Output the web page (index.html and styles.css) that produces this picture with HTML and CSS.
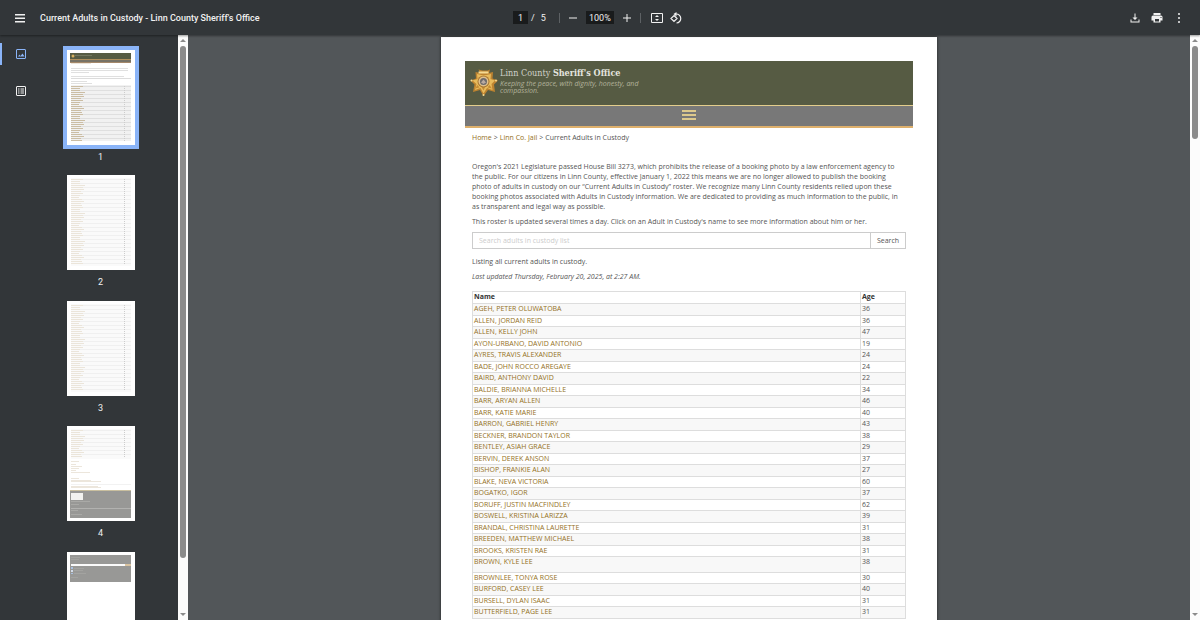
FILE: index.html
```html
<!DOCTYPE html>
<html lang="en">
<head>
    <meta charset="UTF-8">
    <meta name="viewport" content="width=device-width, initial-scale=1.0">
    <title>Current Adults in Custody - Linn County Sheriff's Office</title>
    <link rel="stylesheet" href="styles.css">
</head>
<body>
    <header class="toolbar">
        <div class="toolbar-start">
            <button class="icon-btn" aria-label="Menu">
                <svg viewBox="0 0 24 24"><path d="M2 4h20v3H2zM2 11h20v3H2zM2 18h20v3H2z"/></svg>
            </button>
            <h1 class="doc-title">Current Adults in Custody - Linn County Sheriff's Office</h1>
        </div>
        <div class="toolbar-center">
            <input class="page-input" type="text" value="1" aria-label="Page number">
            <span class="page-slash">/</span>
            <span class="page-total">5</span>
            <span class="divider"></span>
            <button class="icon-btn" aria-label="Zoom out">
                <svg viewBox="0 0 24 24"><path d="M4 11h16v2H4z"/></svg>
            </button>
            <input class="zoom-input" type="text" value="100%" aria-label="Zoom level">
            <button class="icon-btn" aria-label="Zoom in">
                <svg viewBox="0 0 24 24"><path d="M4 11h7V4h2v7h7v2h-7v7h-2v-7H4z"/></svg>
            </button>
            <span class="divider"></span>
            <button class="icon-btn fit-btn" aria-label="Fit to page">
                <svg viewBox="0 0 24 24"><path fill-rule="evenodd" d="M2 2h20a2 2 0 0 1 2 2v16a2 2 0 0 1-2 2H2a2 2 0 0 1-2-2V4a2 2 0 0 1 2-2zm0 2v16h20V4zM12 6l4 4H8zM12 18l4-4H8z"/></svg>
            </button>
            <button class="icon-btn" aria-label="Rotate">
                <svg viewBox="0 0 24 24"><path fill="none" stroke="currentColor" stroke-width="2.4" d="M8 7l6 6-6 6-6-6zM12 4a9 9 0 1 1 1 18"/><path d="M13 0v9L7 4z"/></svg>
            </button>
        </div>
        <div class="toolbar-end">
            <button class="icon-btn" aria-label="Download">
                <svg viewBox="0 0 24 24"><path d="M11 3h2v8h4l-5 5-5-5h4zM3 15h2v4h14v-4h2v6H3z"/></svg>
            </button>
            <button class="icon-btn" aria-label="Print">
                <svg viewBox="0 0 24 24"><path fill-rule="evenodd" d="M5 2h14v4H5zM4 7h16a3 3 0 0 1 3 3v7h-4v4H5v-4H1v-7a3 3 0 0 1 3-3zm4 7v5h8v-5zm11-4v2h2v-2z"/></svg>
            </button>
            <button class="icon-btn" aria-label="More actions">
                <svg viewBox="0 0 24 24"><circle cx="12" cy="4" r="2"/><circle cx="12" cy="12" r="2"/><circle cx="12" cy="20" r="2"/></svg>
            </button>
        </div>
    </header>

    <div class="viewer">
        <aside class="sidebar">
            <nav class="rail">
                <button class="rail-btn active" aria-label="Thumbnails">
                    <svg viewBox="0 0 20 20"><rect x="1" y="1" width="18" height="18" rx="1"/><path d="M4 15l3-4 2 3 4-5 4 6z" class="solid"/></svg>
                </button>
                <button class="rail-btn" aria-label="Document outline">
                    <svg viewBox="0 0 20 20"><rect x="1" y="1" width="18" height="18" rx="1"/><path d="M4 6h3M9 6h7M4 10h3M9 10h7M4 14h3M9 14h7"/></svg>
                </button>
            </nav>
            <div class="thumbs">
                <button class="thumb active">
                    <svg class="thumb-page" viewBox="0 0 68 95">
                        <rect x="3" y="3" width="61" height="6" fill="#565b43"/>
                        <circle cx="6" cy="6" r="1.5" fill="#d8b060"/>
                        <path d="M8 5.5h17" stroke="#73775f"/>
                        <path d="M3 9.5h61" stroke="#b08f5c"/>
                        <rect x="3" y="10" width="61" height="2" fill="#777266"/>
                        <path d="M3 12.5h61" stroke="#a5886a"/>
                        <path d="M4 13.5h20" stroke="#ece5da"/>
                        <path d="M4 18.5h57M4 20.5h57M4 22.5h18M4 26.5h53M4 31.5h16M4 33.5h21" stroke="#e0e0e0"/>
                        <path d="M4 28.5h60" stroke="#dcdcdc"/>
                        <rect x="4" y="35" width="60" height="56" fill="#f1f1f1"/>
                        <g class="lines" data-top="36" data-count="28" data-text="#cbbda4" data-rule="#dfdfdf"></g>
                    </svg>
                    <span class="thumb-label">1</span>
                </button>
                <button class="thumb">
                    <svg class="thumb-page" viewBox="0 0 68 95">
                        <rect x="4" y="3" width="60" height="88" fill="#fafafa"/>
                        <g class="lines" data-top="4" data-count="43" data-text="#ebe5da" data-rule="#f0f0f0"></g>
                    </svg>
                    <span class="thumb-label">2</span>
                </button>
                <button class="thumb">
                    <svg class="thumb-page" viewBox="0 0 68 95">
                        <rect x="4" y="3" width="60" height="88" fill="#fafafa"/>
                        <g class="lines" data-top="4" data-count="43" data-text="#ebe5da" data-rule="#f0f0f0"></g>
                    </svg>
                    <span class="thumb-label">3</span>
                </button>
                <button class="thumb">
                    <svg class="thumb-page" viewBox="0 0 68 95">
                        <rect x="4" y="3" width="60" height="30" fill="#fafafa"/>
                        <g class="lines" data-top="4" data-count="14" data-text="#ebe5da" data-rule="#f0f0f0"></g>
                        <path d="M4 35.5h8M4 38.5h5M4 40.5h11M4 42.5h8M4 44.5h5M4 46.5h19M4 52.5h8M4 54.5h20M4 55.5h30M4 60.5h27M4 61.5h30" stroke="#ece6dc"/>
                        <path d="M4 58.5h60" stroke="#f2f2f2"/>
                        <rect x="3" y="64" width="61" height="1" fill="#c9bf9f"/>
                        <rect x="3" y="65" width="61" height="27" fill="#989896"/>
                        <rect x="4" y="67" width="12" height="7" fill="#f2f2f0"/>
                        <path d="M4 75.5h19M4 78.5h8M4 84.5h7M4 88.5h11" stroke="#a9a9a6"/>
                        <path d="M4 82.5h60" stroke="#b2b2b0"/>
                    </svg>
                    <span class="thumb-label">4</span>
                </button>
                <button class="thumb" aria-label="Page 5">
                    <svg class="thumb-page" viewBox="0 0 68 95">
                        <rect x="3" y="3" width="61" height="27" fill="#989896"/>
                        <rect x="4" y="12" width="60" height="2" fill="#fafafa"/>
                        <rect x="58" y="12" width="6" height="2" fill="#d9c3a0"/>
                        <path d="M4 5.5h9M4 7.5h8M7 16.5h10M7 18.5h9M7 21.5h12M4 25.5h7" stroke="#a3a3a0"/>
                        <rect x="4" y="15" width="2" height="2" fill="#a9c0e0"/>
                        <rect x="4" y="18" width="2" height="2" fill="#d3dcea"/>
                        <rect x="4" y="21" width="2" height="1" fill="#a9c0e0"/>
                    </svg>
                </button>
            </div>
            <div class="scrollbar">
                <span class="arrow up"></span>
                <span class="track"><span class="handle handle-long"></span></span>
                <span class="arrow down"></span>
            </div>
        </aside>

        <main class="canvas">
            <article class="page">
                <header class="banner">
                    <svg class="badge" viewBox="0 0 56 60">
                        <path d="M27 58l-7-12-14 4 3-15-8-8 11-4-1-13 9 2-3-7 8 2h10l5-2-2 7 8-2-1 13 11 4-8 8 2 15-14-4z" fill="#bd8330"/>
                        <path d="M27 53l-6-11-11 4 3-12-8-7 10-3-1-10 9 2h10l9-2-1 10 9 3-7 7 2 12-11-4z" fill="#e8bb5c"/>
                        <path d="M27 47l-5-9h9zM10 43l5-7 4 5zM44 43l-5-7-4 5z" fill="#c48a34"/>
                        <circle cx="27" cy="29" r="12" fill="#a8752f"/>
                        <circle cx="27" cy="29" r="10" fill="#dfc08c"/>
                        <circle cx="27" cy="29" r="7" fill="#6d6a6c"/>
                        <path d="M22 31l5-6 5 6-5 3z" fill="#b9a9a0"/>
                        <path d="M17 9h20v4H17z" fill="#f5da93"/>
                        <circle cx="3" cy="27" r="2" fill="#f5da93"/>
                        <circle cx="52" cy="27" r="2" fill="#f5da93"/>
                        <circle cx="27" cy="56" r="2" fill="#f5da93"/>
                    </svg>
                    <div class="banner-text">
                        <h2 class="site-name">Linn County <strong>Sheriff's Office</strong></h2>
                        <p class="motto">Keeping the peace, with dignity, honesty, and compassion.</p>
                    </div>
                </header>
                <div class="site-nav">
                    <button class="nav-toggle" aria-label="Open navigation"><span></span><span></span><span></span></button>
                </div>

                <div class="content">
                    <nav class="breadcrumb">
                        <a href="#">Home</a><span>&gt;</span><a href="#">Linn Co. Jail</a><span>&gt;</span>Current Adults in Custody
                    </nav>
                    <p>Oregon's 2021 Legislature passed House Bill 3273, which prohibits the release of a booking photo by a law enforcement agency to the public. For our citizens in Linn County, effective January 1, 2022 this means we are no longer allowed to publish the booking photo of adults in custody on our “Current Adults in Custody” roster. We recognize many Linn County residents relied upon these booking photos associated with Adults in Custody information. We are dedicated to providing as much information to the public, in as transparent and legal way as possible.</p>
                    <p>This roster is updated several times a day. Click on an Adult in Custody's name to see more information about him or her.</p>
                    <form class="search">
                        <input type="text" placeholder="Search adults in custody list" aria-label="Search adults in custody list">
                        <button type="button">Search</button>
                    </form>
                    <p class="listing">Listing all current adults in custody.</p>
                    <p class="updated">Last updated Thursday, February 20, 2025, at 2:27 AM.</p>

                    <table class="roster">
                        <thead>
                            <tr><th>Name</th><th class="age">Age</th></tr>
                        </thead>
                        <tbody>
                            <tr><td><a href="#">AGEH, PETER OLUWATOBA</a></td><td>36</td></tr>
                            <tr><td><a href="#">ALLEN, JORDAN REID</a></td><td>36</td></tr>
                            <tr><td><a href="#">ALLEN, KELLY JOHN</a></td><td>47</td></tr>
                            <tr><td><a href="#">AYON-URBANO, DAVID ANTONIO</a></td><td>19</td></tr>
                            <tr><td><a href="#">AYRES, TRAVIS ALEXANDER</a></td><td>24</td></tr>
                            <tr><td><a href="#">BADE, JOHN ROCCO AREGAYE</a></td><td>24</td></tr>
                            <tr><td><a href="#">BAIRD, ANTHONY DAVID</a></td><td>22</td></tr>
                            <tr><td><a href="#">BALDIE, BRIANNA MICHELLE</a></td><td>34</td></tr>
                            <tr><td><a href="#">BARR, ARYAN ALLEN</a></td><td>46</td></tr>
                            <tr><td><a href="#">BARR, KATIE MARIE</a></td><td>40</td></tr>
                            <tr><td><a href="#">BARRON, GABRIEL HENRY</a></td><td>43</td></tr>
                            <tr><td><a href="#">BECKNER, BRANDON TAYLOR</a></td><td>38</td></tr>
                            <tr><td><a href="#">BENTLEY, ASIAH GRACE</a></td><td>29</td></tr>
                            <tr><td><a href="#">BERVIN, DEREK ANSON</a></td><td>37</td></tr>
                            <tr><td><a href="#">BISHOP, FRANKIE ALAN</a></td><td>27</td></tr>
                            <tr><td><a href="#">BLAKE, NEVA VICTORIA</a></td><td>60</td></tr>
                            <tr><td><a href="#">BOGATKO, IGOR</a></td><td>37</td></tr>
                            <tr><td><a href="#">BORUFF, JUSTIN MACFINDLEY</a></td><td>62</td></tr>
                            <tr><td><a href="#">BOSWELL, KRISTINA LARIZZA</a></td><td>39</td></tr>
                            <tr><td><a href="#">BRANDAL, CHRISTINA LAURETTE</a></td><td>31</td></tr>
                            <tr><td><a href="#">BREEDEN, MATTHEW MICHAEL</a></td><td>38</td></tr>
                            <tr><td><a href="#">BROOKS, KRISTEN RAE</a></td><td>31</td></tr>
                            <tr class="tall"><td><a href="#">BROWN, KYLE LEE</a></td><td>38</td></tr>
                            <tr><td><a href="#">BROWNLEE, TONYA ROSE</a></td><td>30</td></tr>
                            <tr><td><a href="#">BURFORD, CASEY LEE</a></td><td>40</td></tr>
                            <tr><td><a href="#">BURSELL, DYLAN ISAAC</a></td><td>31</td></tr>
                            <tr><td><a href="#">BUTTERFIELD, PAGE LEE</a></td><td>31</td></tr>
                        </tbody>
                    </table>
                </div>
            </article>
        </main>
        <div class="scrollbar">
            <span class="arrow up"></span>
            <span class="track"><span class="handle handle-short"></span></span>
            <span class="arrow down"></span>
        </div>
    </div>
    <script src="script.js"></script>
</body>
</html>
```
FILE: styles.css
```css
* {
    margin: 0;
    padding: 0;
    box-sizing: border-box;
}

body {
    font-family: Roboto, sans-serif;
    font-size: 9px;
    height: 100vh;
    display: flex;
    flex-direction: column;
    background: #525659;
    color: #f1f1f1;
    overflow: hidden;
}

button,
input {
    font: inherit;
    color: inherit;
    background: none;
    border: none;
}

button {
    cursor: pointer;
}

/* toolbar */
.toolbar {
    display: grid;
    grid-template-columns: 1fr auto 1fr;
    align-items: center;
    flex: none;
    height: 35px;
    padding: 0 15px 0 14px;
    background: #323639;
    box-shadow: 0 1px 2px rgba(0, 0, 0, 0.4);
    z-index: 1;
}

.toolbar-start,
.toolbar-center,
.toolbar-end {
    display: flex;
    align-items: center;
}

.toolbar-start {
    gap: 14px;
}

.toolbar-center {
    gap: 7px;
    padding-right: 4px;
}

.toolbar-end {
    gap: 10px;
    justify-content: flex-end;
}

.doc-title {
    font-size: 9px;
    font-weight: 500;
    white-space: nowrap;
}

.icon-btn {
    width: 12px;
    height: 12px;
}

.icon-btn svg {
    display: block;
    width: 12px;
    height: 12px;
    fill: currentColor;
}

.page-input,
.zoom-input {
    height: 13px;
    background: #191b1c;
    text-align: center;
}

.page-input {
    width: 15px;
}

.zoom-input {
    width: 28px;
}

.page-slash {
    margin: 0 -4px;
}

.page-total {
    margin: 0 6px 0 3px;
}

.divider {
    width: 1px;
    height: 10px;
    background: #5d6164;
}

.fit-btn {
    margin-left: 3px;
}

/* sidebar */
.viewer {
    display: flex;
    flex: 1;
    min-height: 0;
}

.sidebar {
    display: flex;
    flex: none;
    width: 188px;
    background: #323639;
    overflow: hidden;
}

.rail {
    display: flex;
    flex-direction: column;
    gap: 15px;
    width: 42px;
    padding-top: 8px;
}

.rail-btn {
    display: flex;
    align-items: center;
    justify-content: center;
    height: 22px;
    border-left: 2px solid transparent;
    border-right: 2px solid transparent;
}

.rail-btn.active {
    border-left-color: #8ab4f8;
    color: #8ab4f8;
}

.rail-btn svg {
    width: 10px;
    height: 10px;
    fill: none;
    stroke: currentColor;
    stroke-width: 2;
}

.rail-btn .solid {
    fill: currentColor;
    stroke: none;
}

.thumbs {
    flex: 1;
    display: flex;
    flex-direction: column;
    align-items: center;
    padding: 11px 19px 0 0;
}

.thumb {
    flex: none;
    margin-bottom: 8px;
}

.thumb:nth-child(even) {
    margin-bottom: 9px;
}

.thumb-page {
    display: block;
    width: 76px;
    height: 103px;
    border: 4px solid transparent;
    background: #fff;
    background-clip: padding-box;
}

.thumb.active .thumb-page {
    border-color: #8ab4f8;
}

.thumb-label {
    display: block;
    margin-top: 2px;
    line-height: 12px;
}

/* scrollbars */
.scrollbar {
    display: flex;
    flex-direction: column;
    align-items: center;
    flex: none;
    width: 10px;
    padding: 4px 0;
    background: #fcfcfc;
}

.arrow {
    border: 3px solid transparent;
}

.arrow.up {
    border-top: none;
    border-bottom-color: #8b8b8b;
}

.arrow.down {
    border-bottom: none;
    border-top-color: #8b8b8b;
}

.track {
    flex: 1;
    width: 6px;
    padding: 4px 0;
}

.handle {
    display: block;
    border-radius: 3px;
    background: #8b8b8b;
}

.handle-long {
    height: 91%;
}

.handle-short {
    height: 93px;
}

/* document page */
.canvas {
    flex: 1;
    min-width: 0;
    padding-top: 2px;
    overflow: hidden;
}

.page {
    max-width: 496px;
    min-height: 693px;
    margin: 0 auto;
    padding: 24px;
    background: #fff;
    box-shadow: 0 0 3px rgba(0, 0, 0, 0.6);
    font-family: "Open Sans", sans-serif;
    font-size: 7px;
    line-height: 10px;
    color: #555;
}

.banner {
    display: flex;
    gap: 2px;
    height: 44px;
    padding: 6px 5px;
    background: #565b43;
}

.badge {
    width: 28px;
    height: 30px;
}

.banner-text {
    width: 150px;
}

.site-name {
    font-family: "DejaVu Serif Condensed", "DejaVu Serif", serif;
    font-size: 9px;
    font-weight: 400;
    line-height: 13px;
    white-space: nowrap;
    color: #cfd0c8;
}

.site-name strong {
    color: #e4e4df;
}

.motto {
    font-style: italic;
    line-height: 7px;
    color: #b3b39c;
}

.site-nav {
    display: flex;
    justify-content: center;
    height: 23px;
    padding-top: 4px;
    border-top: 1px solid #e3cd8c;
    border-bottom: 2px solid #deb06c;
    background: #787878;
}

.nav-toggle {
    display: flex;
    flex-direction: column;
    gap: 2px;
    width: 14px;
}

.nav-toggle span {
    height: 2px;
    background: #dcc88c;
}

.content {
    padding: 5px 7px 0;
}

.content a {
    color: #94701c;
    text-decoration: none;
}

.content p {
    margin-bottom: 5px;
}

.content .breadcrumb {
    margin-bottom: 19px;
}

.breadcrumb span {
    margin: 0 2px;
}

.search {
    display: flex;
    height: 17px;
    margin-bottom: 8px;
    border: 1px solid #ccc;
}

.search input {
    flex: 1;
    min-width: 0;
    padding: 0 6px;
}

.search input::placeholder {
    color: #ccc;
}

.search button {
    width: 35px;
    border-left: 1px solid #ccc;
}

.content .updated {
    margin-bottom: 9px;
    font-style: italic;
}

.roster {
    width: 100%;
    border: 1px solid #ddd;
    border-bottom: none;
    border-spacing: 0;
    table-layout: fixed;
}

.roster th,
.roster td {
    height: 11px;
    padding: 0 1px;
    border-bottom: 1px solid #ddd;
    line-height: 10px;
    text-align: left;
    vertical-align: top;
}

.roster th {
    height: 12px;
    color: #333;
}

.roster th + th,
.roster td + td {
    border-left: 1px solid #ddd;
}

.roster .age {
    width: 45px;
}

/* every other row is shaded and one pixel taller */
.roster tbody tr:nth-child(odd) {
    background: #f8f8f8;
}

.roster tbody tr:nth-child(odd) td {
    height: 12px;
}

.roster tbody .tall td,
.roster tbody .tall:nth-child(odd) td {
    height: 16px;
}
```
FILE: script.js
```js
// small table rows drawn inside the page thumbnails
const groups = document.querySelectorAll('.lines');
const nameWidths = [12, 9, 9, 14, 12, 13, 10, 12, 9, 8, 11, 13, 10, 11];
const svgNS = 'http://www.w3.org/2000/svg';

const addBar = (group, x, y, width, height, color) => {
    const bar = document.createElementNS(svgNS, 'rect');
    bar.setAttribute('x', x);
    bar.setAttribute('y', y);
    bar.setAttribute('width', width);
    bar.setAttribute('height', height);
    bar.setAttribute('fill', color);
    group.appendChild(bar);
};

groups.forEach((group) => {
    const top = Number(group.dataset.top);
    const count = Number(group.dataset.count);

    for (let i = 0; i < count; i++) {
        const y = top + i * 2;
        if (i % 2 === 0) {
            addBar(group, 4, y, 60, 1, group.dataset.rule);
        }
        addBar(group, 4, y, nameWidths[i % nameWidths.length], 1, group.dataset.text);
        addBar(group, 57, y, 1, 1, '#ccc');
    }
});
```
